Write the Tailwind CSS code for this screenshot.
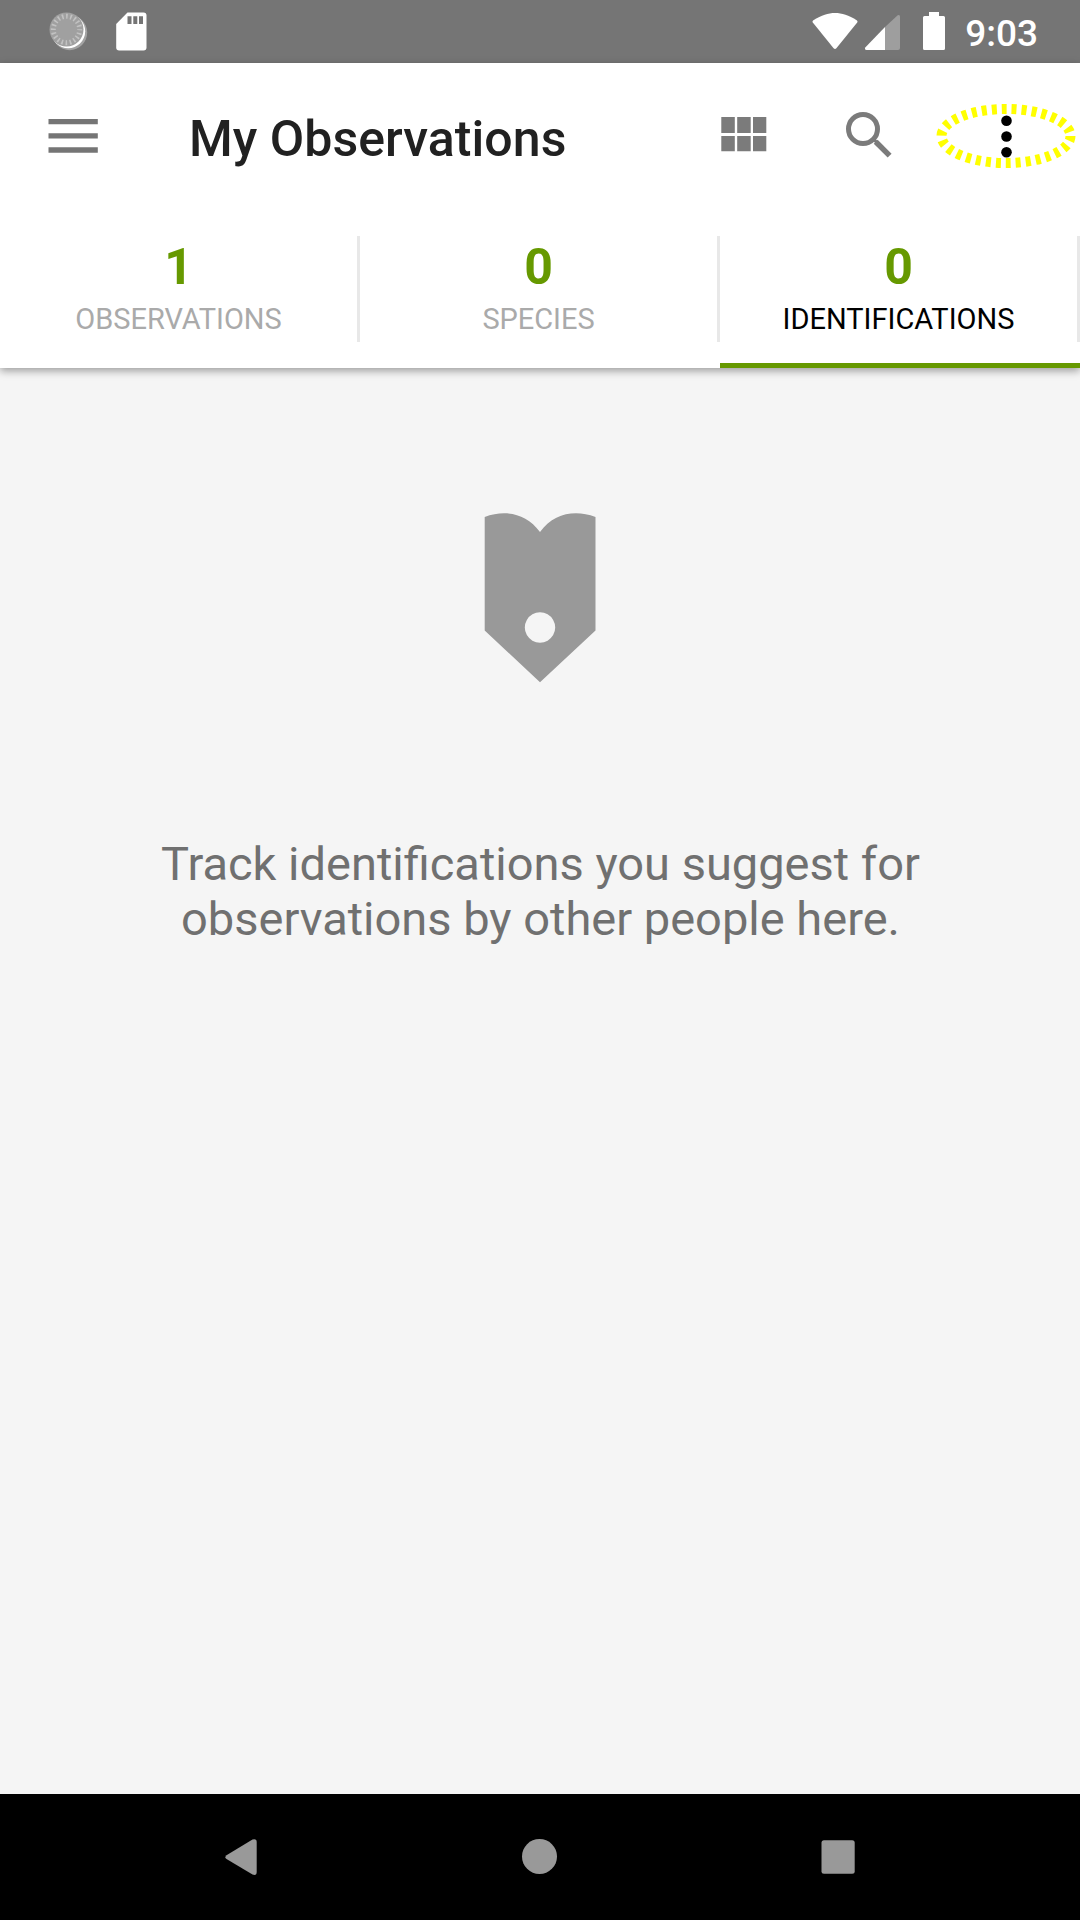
<!DOCTYPE html>
<html lang="en">
<head>
<meta charset="utf-8">
<title>My Observations</title>
<script src="https://cdn.jsdelivr.net/npm/@tailwindcss/browser@4"></script>
</head>
<body class="flex h-[1920px] w-[1080px] flex-col overflow-hidden bg-[#f5f5f5] font-['Roboto',sans-serif]">
  <!-- Status bar -->
  <header class="flex h-[63px] shrink-0 items-center justify-between bg-[#757575] pl-[46px] pr-[42px] text-white">
    <div class="flex items-center">
      <svg class="h-[63px] w-[44px]" viewBox="46 0 44 63">
        <circle cx="69.6" cy="32.6" r="17.6" fill="#a3a3a3"/>
        <circle cx="68.2" cy="31.2" r="17" fill="#fff"/>
        <circle cx="66.5" cy="29.5" r="17" fill="#a0a0a0"/>
        <circle cx="66.5" cy="29.5" r="13.2" fill="none" stroke="#c2c2c2" stroke-width="5" stroke-dasharray="1.6 2.547" stroke-dashoffset=".8"/>
      </svg>
      <svg class="h-[63px] w-[60px]" viewBox="90 0 60 63">
        <path fill="#fff" d="M127.5 12.5H143.5a3 3 0 0 1 3 3V47.5a3 3 0 0 1-3 3H119.2a3 3 0 0 1-3-3V24Z"/>
        <path fill="#757575" d="M127.5 16.2h4v7.8h-4zM133.3 16.2h4v7.8h-4zM139 16.2h4v7.8h-4z"/>
      </svg>
    </div>
    <div class="flex items-center">
      <svg class="h-[63px] w-[150px]" viewBox="810 0 150 63">
        <path fill="#fff" d="M813 20.4C822 15.2 828 13 835 13S848.5 15.2 857 20.4Q858 21.3 857.2 22.4L836.4 48.3Q835 49.6 833.6 48.3L812.8 22.4Q812 21.3 813 20.4Z"/>
        <path fill="#9e9e9e" d="M885 27 897.7 15.2Q900 14.2 900 16.5V48Q900 50 898 50H885Z"/>
        <path fill="#fff" d="M885 27V50H866.5Q864 49.5 865.5 47.2Z"/>
        <path fill="#fff" d="M929 12h10v4h4.500q1.500 0 1.500 1.500V48.500q0 1.500-1.500 1.500h-19q-1.500 0-1.500-1.500V17.500q0-1.500 1.500-1.500h4.500z"/>
      </svg>
      <span class="pt-[3px] pl-[5px] text-[37px] leading-none font-medium">9:03</span>
    </div>
  </header>

  <!-- Toolbar and tabs -->
  <section class="relative z-10 flex h-[305px] shrink-0 flex-col bg-white shadow-[0_3px_8px_rgba(0,0,0,0.36)]">
    <div class="flex h-[173px] shrink-0 items-start">
      <svg class="h-[147px] w-[189px]" viewBox="0 63 189 147" fill="#757575"><path d="M48.500 119h49.300v5.300H48.500zM48.500 133.200h49.300v5.300H48.500zM48.500 147.300h49.300v5.500H48.500z"/></svg>
      <h1 class="flex h-[152px] w-[499px] items-center text-[50px] leading-none font-medium tracking-[0.06px] text-[#212121]">My Observations</h1>
      <svg class="h-[147px] w-[112px]" viewBox="688 63 112 147" fill="#7b7b7b">
        <path d="M721.300 117h13.500v16h-13.500zM737.200 117h13.500v16h-13.500zM753 117h13.300v16H753zM721.300 136h13.500v15.300h-13.500zM737.200 136h13.500v15.300h-13.500zM753 136h13.300v15.300H753z"/>
      </svg>
      <svg class="h-[147px] w-[130px]" viewBox="800 63 130 147" fill="none" stroke="#7b7b7b">
        <circle cx="863" cy="129" r="14.500" stroke-width="5"/>
        <path d="M873 139 876.500 142" stroke-width="3"/>
        <path d="M875.700 141.700 889.600 155.600" stroke-width="5.500"/>
      </svg>
      <svg class="h-[147px] w-[150px]" viewBox="930 63 150 147">
        <circle cx="1006.500" cy="120.700" r="5.300"/><circle cx="1006.500" cy="136.500" r="5.300"/><circle cx="1006.500" cy="152.200" r="5.300"/>
        <ellipse cx="1006" cy="136" rx="64.500" ry="27" fill="none" stroke="#ff0" stroke-width="10" stroke-dasharray="5 5"/>
      </svg>
    </div>
    <nav class="grid h-[132px] grid-cols-3 text-center">
      <div class="flex flex-col">
        <div class="h-[106px] border-r-[3px] border-[#e8e8e8] pt-[6px]">
          <div class="text-[50px] leading-[50px] font-bold text-[#669900]">1</div>
          <div class="pt-[12px] text-[29px] leading-[30px] tracking-[-0.05px] text-[#aaaaaa]">OBSERVATIONS</div>
        </div>
      </div>
      <div class="flex flex-col">
        <div class="h-[106px] border-r-[3px] border-[#e8e8e8] pt-[6px]">
          <div class="text-[50px] leading-[50px] font-bold text-[#669900]">0</div>
          <div class="pt-[12px] text-[29px] leading-[30px] tracking-[-0.05px] text-[#aaaaaa]">SPECIES</div>
        </div>
      </div>
      <div class="flex flex-col justify-between">
        <div class="h-[106px] border-r-[3px] border-[#e8e8e8] pt-[6px]">
          <div class="text-[50px] leading-[50px] font-bold text-[#669900]">0</div>
          <div class="pt-[12px] text-[29px] leading-[30px] text-black">IDENTIFICATIONS</div>
        </div>
        <div class="h-[5px] bg-[#669900]"></div>
      </div>
    </nav>
  </section>

  <!-- Empty state -->
  <main class="flex flex-1 flex-col items-center pt-[142px]">
    <svg class="h-[176px] w-[120px]" viewBox="480 510 120 176">
      <path fill="#999" fill-rule="evenodd" d="M484.700 517C505 509.500 526 513 540 532C554 513 575 509.500 595.500 517V630.500L540 682.300 484.700 630.500ZM540 612.300a15.200 15.200 0 1 0 .01 0Z"/>
    </svg>
    <p class="pt-[150px] pl-px text-center text-[47px] leading-[55px] text-[#707070]">Track identifications you suggest for<br>observations by other people here.</p>
  </main>

  <!-- System navigation -->
  <footer class="flex h-[126px] shrink-0 items-center bg-black">
    <svg class="h-[126px] w-[1080px]" viewBox="0 1794 1080 126" fill="#999">
      <path d="M226.500 1855.300 252.500 1839.600Q256.700 1838.300 256.700 1842V1872Q256.700 1876 252.500 1874.500L226.500 1859Q224.300 1857.200 226.500 1855.300Z"/>
      <circle cx="539.500" cy="1856.500" r="17.500"/>
      <rect x="821.500" y="1840.300" width="33.200" height="33.400" rx="2.500"/>
    </svg>
  </footer>
</body>
</html>
